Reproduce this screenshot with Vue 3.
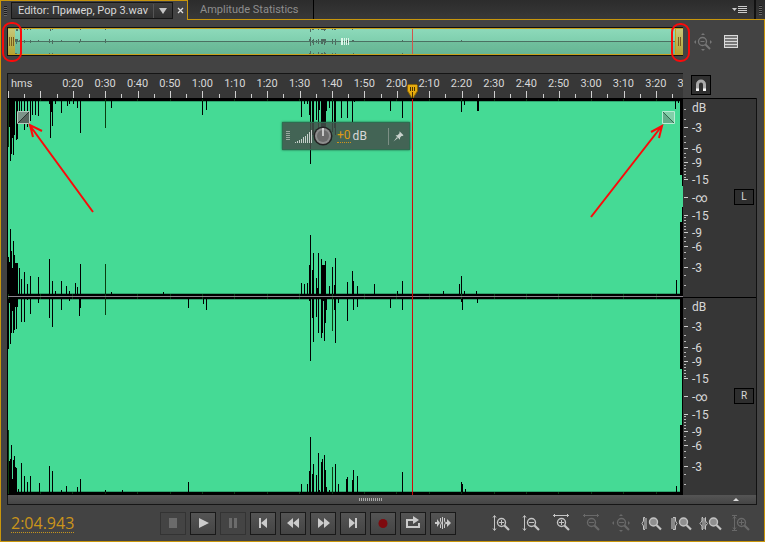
<script setup>
const SPAN = 675
const STEP = 32.4

// Peaks are [x, tip] pairs on the 675 x 396 wave canvas.
const parse = (s) => s.trim().split(/\s+/).map((p) => p.split(':').map(Number))

const peaks = [
  {
    base: 2,
    list: parse(`0:48 1:28 2:62 3:55 4:39 5:56 6:36 8:41 9:40 11:20 13:22 16:31 19:28 22:22 24:16
      27:16 30:17 41:5 42:39 43:13 44:27 47:5 53:14 59:7 61:5 65:5 69:9 72:34 97:29 103:9 194:16 198:11
      293:18 296:5 299:5 301:16 302:65 304:36 305:36 308:21 310:36 311:11 313:28 314:35 315:32 316:38 317:32
      318:12 321:9 324:33 326:29 327:36 333:19 339:19 344:23 346:3 382:12 394:19 453:13 456:6 469:12 470:12 667:10 670:4`),
  },
  {
    base: 195,
    list: parse(`0:158 1:163 2:130 3:152 4:169 5:142 6:156 7:164 8:164 9:164 11:169 13:180 16:173 19:185 22:177
      30:178 41:160 44:182 47:192 53:182 58:187 61:192 67:184 69:188 72:165 97:165 103:193 155:193
      293:184 296:185 299:184 301:166 302:136 304:171 305:154 308:179 309:189 310:154 313:160 314:166 315:166 316:166
      317:162 321:187 324:168 326:186 327:159 339:183 344:172 345:182 349:187 366:185 389:192 394:182
      435:192 451:185 453:177 456:192 468:192 668:181`),
  },
  {
    base: 200,
    list: parse(`0:250 1:204 2:245 3:234 4:212 5:234 6:231 7:208 8:230 9:208 13:223 16:223 19:201 22:215 30:204 41:219
      44:228 53:211 61:202 71:217 72:209 97:216 180:209 195:205 198:211
      301:202 302:262 304:219 305:243 308:218 310:234 313:239 314:234 315:202 316:242 317:224 318:211 324:232 326:211
      327:244 330:204 339:222 345:211 349:208 382:209 394:211 453:203 454:211 469:204`),
  },
  {
    base: 393,
    list: parse(`0:331 1:362 2:360 3:346 4:380 5:361 6:357 7:368 8:369 10:390 13:364 16:377 19:383 22:377 31:384 41:367
      44:372 53:391 58:387 69:388 72:380 97:391 114:391 180:383
      293:385 299:385 301:372 302:338 304:375 305:365 308:376 310:354 311:391 313:363 314:360 316:356 317:371 318:388
      321:391 324:368 327:365 330:385 338:380 339:378 344:381 345:371 349:377 394:373 453:383 454:385 457:390 668:387`),
  },
]

const toPath = (group) =>
  group.list
    .map(([x, tip]) => `M${x} ${Math.min(group.base, tip)}h1V${Math.max(group.base, tip)}h-1z`)
    .join('')
const peakPath = peaks.map(toPath).join('')

const labels = ['0:20', '0:30', '0:40', '0:50', '1:00', '1:10', '1:20', '1:30', '1:40', '1:50', '2:00',
  '2:10', '2:20', '2:30', '2:40', '2:50', '3:00', '3:10', '3:20', '3:30']
const ticks = Array.from({ length: 42 }, (_, i) => ({
  x: `${((i * STEP) / 2 / SPAN) * 100}%`,
  major: i % 2 === 0,
}))
const gridX = Array.from({ length: 21 }, (_, i) => Math.floor(i * STEP))

const pct = (v) => `${(v / 198) * 100}%`
const levels = [
  { y: 9, t: 'dB', none: true }, { y: 29, t: '-3' }, { y: 50, t: '-6' }, { y: 64, t: '-9' },
  { y: 81, t: '-15' }, { y: 99, t: '-∞' }, { y: 117, t: '-15' }, { y: 134, t: '-9' },
  { y: 148, t: '-6' }, { y: 169, t: '-3' },
]
const minors = [11, 21, 38, 44, 55, 59, 67, 70, 73, 76, 79, 119, 122, 125, 128, 131, 139, 143, 154, 160, 177, 187]
const bars = [1, 2, 3, 4, 6, 7, 9, 11, 13]

const transport = [
  { n: 'Stop', off: true, d: 'M9 6h8v10H9z' },
  { n: 'Play', d: 'M9 6l10 5-10 5z' },
  { n: 'Pause', off: true, d: 'M9 6h3v10H9zM14 6h3v10h-3z' },
  { n: 'Go to start', d: 'M9 6h2v10H9zM17 6v10l-6-5z' },
  { n: 'Rewind', d: 'M13 6v10l-6-5zM19 6v10l-6-5z' },
  { n: 'Fast forward', d: 'M8 6v10l6-5zM14 6v10l6-5z' },
  { n: 'Go to end', d: 'M9 6v10l6-5zM15 6h2v10h-2z' },
  { n: 'Record', rec: true },
  { n: 'Loop', d: 'M6 7h7V4l6 4-6 4V9H8v5h10v-3h2v5H6z' },
  { n: 'Skip selection', d: 'M10 6h1v3l1 2-1 2v3h-1v-3l1-2-1-2zM14 6h1v3l1 2-1 2v3h-1v-3l1-2-1-2zM5 10h2V7l3 4-3 4v-3H5zM16 10h1V7l4 4-4 4v-3h-1zM12 5h1v12h-1z' },
]
const zooms = [
  { n: 'Zoom in amplitude', k: 'v', s: '+' },
  { n: 'Zoom out amplitude', k: 'v', s: '-' },
  { n: 'Zoom in time', k: 'h', s: '+' },
  { n: 'Zoom out time', k: 'h', s: '-', off: true },
  { n: 'Zoom out full', k: 'f', s: '-', off: true },
  { n: 'Zoom in at in point', k: 'l' },
  { n: 'Zoom in at out point', k: 'r' },
  { n: 'Zoom to selection', k: 's' },
  { n: 'Zoom reset', k: 'i', s: '+', off: true },
]
</script>

<template>
  <main class="editor">
    <header class="tabs">
      <div class="tab-active">
        <span class="grip"></span>
        <button class="title">
          <span>Editor: Пример, Pop 3.wav</span>
          <svg class="caret" viewBox="0 0 16 14" width="16" height="14"><path d="M0 0h1v14H0z" fill="#555" /><path d="M6 4h8l-4 6z" fill="#c4c4c4" /></svg>
        </button>
        <button class="close" aria-label="Close tab">
          <svg viewBox="0 0 7 7" width="7" height="7"><path d="M1 1l5 5M6 1L1 6" stroke="#ddd" stroke-width="1.300" /></svg>
        </button>
      </div>
      <div class="tab-rest">
        <button class="tab">Amplitude Statistics</button>
        <button class="menu" aria-label="Panel menu">
          <svg viewBox="0 0 15 9" width="15" height="9"><path d="M0 3h5L2.500 6z" fill="#ccc" /><path d="M6 0h9v1H6zM6 2h9v1H6zM6 4h9v1H6zM6 6h9v1H6z" fill="#ccc" transform="translate(0 1)" /></svg>
        </button>
        <span class="edge"><span class="grip"></span></span>
      </div>
    </header>

    <section class="body">
      <div class="row overview-row">
        <div class="overview">
          <svg class="fill" viewBox="0 0 675 396" preserveAspectRatio="none">
            <path :d="peakPath" fill="#4f6b60" shape-rendering="crispEdges" />
            <path d="M0 190h675v15H0z" fill="#4b7062" />
          </svg>
          <svg class="over-line" viewBox="0 0 675 27" preserveAspectRatio="none">
            <path d="M404 0h1v27h-1z" fill="#d0544c" />
            <path d="M333 10h2v7h-2zM336 10h1v7h-1zM338 10h1v7h-1zM340 10h1v7h-1z" fill="#dff5ea" />
          </svg>
          <span class="handle"><i></i><i></i><i></i></span>
          <span class="handle end"><i></i><i></i></span>
        </div>
        <div class="side-tools">
          <button class="plain" aria-label="Zoom out full" disabled>
            <svg viewBox="0 0 18 18" width="18" height="18" fill="none" stroke="#777"><circle cx="8.500" cy="8.500" r="4" stroke-width="1.300" /><path d="M6.500 8.500h4" /><path d="M11.500 11.500l4.500 4.500" stroke-width="2" /><path d="M9 0l2 2H7zM9 18l-2-2h4zM0 9l2-2v4zM18 9l-2-2v4z" fill="#777" stroke="none" /></svg>
          </button>
          <button class="plain" aria-label="Track list">
            <svg viewBox="0 0 14 14" width="14" height="14"><path d="M0 0h14v13H0z" fill="#dadada" /><path d="M1 1h12v2H1zM1 4h12v2H1zM1 7h12v2H1zM1 10h12v2H1z" fill="#777" /></svg>
          </button>
        </div>
      </div>

      <div class="row time-row">
        <div class="timeline">
          <svg class="ticks" width="100%" height="7" shape-rendering="crispEdges">
            <rect v-for="t in ticks" :key="t.x" :x="t.x" :y="t.major ? 0 : 3" width="1" :height="t.major ? 7 : 4" fill="#cfcfcf" />
          </svg>
          <div class="times">
            <span class="unit">hms</span>
            <span v-for="l in labels" :key="l" class="stamp">{{ l }}</span>
          </div>
          <svg class="head" viewBox="0 0 11 15" width="11" height="15"><path d="M1.500.5h8l1 1v5.500L7 12.500 5.500 15 4 12.500.5 7V1.500z" fill="#e5ab10" stroke="#8a6505" /><path d="M3 3h1v4H3zM5 3h1v4H5zM7 3h1v4H7zM5 8h1v7H5z" fill="#4a3300" /></svg>
        </div>
        <div class="snap-cell">
          <button class="snap" aria-label="Toggle snapping">
            <svg viewBox="0 0 12 13" width="12" height="13" fill="none"><path d="M2.500 12V5.500a3.500 3.500 0 0 1 7 0V12" stroke="#aaa" stroke-width="3" /><path d="M1 9.500h3V12H1zM8 9.500h3V12H8z" fill="#fff" /></svg>
          </button>
        </div>
      </div>

      <div class="row wave-row">
        <div class="wave">
          <svg class="fill" viewBox="0 0 675 396" preserveAspectRatio="none" shape-rendering="crispEdges">
            <path d="M0 0h675v396H0z" fill="#000" />
            <path d="M0 2h672v193H0zM672 76h2v47h-2zM674 87h1v21h-1zM0 200h672v193H0zM672 270h2v56h-2z" fill="#45da95" />
            <path d="M0 2h672v1H0zM0 194h672v1H0zM0 200h672v1H0zM0 392h672v1H0z" fill="#2fa56f" />
            <path :d="peakPath" fill="#000" />
            <path d="M0 197h675v1H0z" fill="#8c878f" />
            <path v-for="x in gridX" :key="x" :d="`M${x} 0h1v2h-1zM${x} 195h1v2h-1zM${x} 198h1v2h-1zM${x} 393h1v2h-1z`" fill="#0c3a14" />
            <path d="M97 2h1v27h-1zM97 165h1v30h-1zM97 200h1v16h-1zM324 200h1v32h-1zM324 368h1v25h-1zM0 2h1v46H0zM0 331h1v62H0z" fill="#0a3d10" />
          </svg>
          <div class="playhead"></div>
          <button class="fade" aria-label="Fade in"><svg viewBox="0 0 13 13" width="13" height="13"><path d="M1 1h11v11H1z" fill="#7c9388" /><path d="M1 12L12 1v11z" fill="#56635c" /><path d="M.5.5h12v12H.5z" fill="none" stroke="#b4cabe" /><path d="M1 12L12 1" stroke="#2c3430" /></svg></button>
          <button class="fade out" aria-label="Fade out"><svg viewBox="0 0 13 13" width="13" height="13"><path d="M1 1h11v11H1z" fill="#83cfa9" /><path d="M1 1v11h11z" fill="#64ad8a" /><path d="M.5.5h12v12H.5z" fill="none" stroke="#b9ecd3" /><path d="M1 1l11 11" stroke="#32684f" /></svg></button>
          <div class="hud">
            <span class="hud-grip"></span>
            <svg class="signal" viewBox="0 0 17 14" width="17" height="14" shape-rendering="crispEdges"><rect v-for="(h, i) in bars" :key="i" :x="i * 2" :y="14 - h" width="1" :height="h" fill="#c6cfca" /></svg>
            <svg class="knob" viewBox="0 0 20 20" width="20" height="20"><circle cx="10" cy="10" r="9.500" fill="#222" /><circle cx="10" cy="10" r="8" fill="#8d8d8d" /><circle cx="10" cy="10" r="6" fill="#6b6b6b" /><path d="M10 2v8" stroke="#eee" stroke-width="1.400" /></svg>
            <button class="gain">+0</button>
            <span class="gain-unit">dB</span>
            <button class="pin" aria-label="Pin"><svg viewBox="0 0 11 11" width="11" height="11" fill="#c9d2cd"><path d="M6 0l4 4-1 .6-1 0L6.500 6.500 6.500 8.500 2 4l2 0L6 2z" transform="translate(.5 .3)" /><path d="M4 6L.5 10.500 5 7z" /></svg></button>
          </div>
        </div>
        <div class="scales">
          <div v-for="c in ['L', 'R']" :key="c" class="scale">
            <svg class="scale-art" width="50" height="100%">
              <rect v-for="m in minors" :key="m" x="1" :y="pct(m)" width="2" height="1" fill="#bbb" shape-rendering="crispEdges" />
              <template v-for="(l, i) in levels" :key="i">
                <rect v-if="!l.none" x="1" :y="pct(l.y)" width="4" height="1" fill="#ccc" shape-rendering="crispEdges" />
                <text x="9" :y="pct(l.y)" dy="5" class="level">{{ l.t }}</text>
              </template>
            </svg>
            <button class="channel">{{ c }}</button>
          </div>
        </div>
      </div>

      <div class="scrollbar">
        <span class="scroll-grip"></span>
        <svg class="up" viewBox="0 0 6 3" width="6" height="3"><path d="M3 0l3 3H0z" fill="#ddd" /></svg>
      </div>
    </section>

    <footer class="controls">
      <div class="clock"><button class="time">2:04.943</button></div>
      <div class="transport">
        <button v-for="b in transport" :key="b.n" class="key" :class="{ off: b.off }" :aria-label="b.n" :disabled="b.off">
          <svg viewBox="0 0 26 23" width="26" height="23">
            <circle v-if="b.rec" cx="13" cy="11.500" r="4.500" fill="#7e0a0e" />
            <path v-else :d="b.d" :fill="b.off ? '#6b6b6b' : '#cbcbcb'" />
          </svg>
        </button>
      </div>
      <div class="zooms">
        <button v-for="z in zooms" :key="z.n" class="plain zoom" :aria-label="z.n" :disabled="z.off">
          <svg viewBox="0 0 24 20" width="24" height="20" fill="none" :stroke="z.off ? '#696969' : '#c4c4c4'">
            <template v-if="z.k === 'v' || z.k === 'i'">
              <path d="M5.500 3v14" />
              <path v-if="z.k === 'v'" d="M4 4.500l1.500-2 1.500 2M4 15.500l1.500 2 1.500-2" />
              <path v-else d="M3 2.500h5M3 17.500h5M4 5.500l1.500-2L7 5.500M4 14.500l1.500 2 1.500-2" />
            </template>
            <path v-if="z.k === 'h'" d="M4 2.500h16M6 1l-1.500 1.500L6 4M18 1l1.500 1.500L18 4" />
            <path v-if="z.k === 'f'" d="M12 1l2 2h-4zM12 19l-2-2h4zM3 10l2-2v4zM21 10l-2-2v4z" fill="#696969" stroke="none" />
            <template v-if="z.s">
              <circle cx="12.500" cy="9.500" r="4" stroke-width="1.400" />
              <path :d="z.s === '+' ? 'M10 9.500h5M12.500 7v5' : 'M10 9.500h5'" />
              <path d="M15.500 12.500l4.500 4.500" stroke-width="2.200" />
            </template>
            <template v-else>
              <circle cx="14.500" cy="9" r="4" fill="#909090" stroke-width="1.400" />
              <path d="M17.500 12l4.500 4.500" stroke-width="2.200" />
              <path v-if="z.k === 'l'" d="M5 5h3v11H5z" fill="#888" stroke="none" />
              <path v-if="z.k === 'l'" d="M6 4.500H4.500V8L3 10.500 4.500 13v3.500H6" />
              <path v-if="z.k === 'r'" d="M2 5h4v11H2z" fill="#888" stroke="none" />
              <path v-if="z.k === 'r'" d="M4 4.500h2.500V8L8 10.500 6.500 13v3.500H4" />
              <path v-if="z.k === 's'" d="M3 5h4v11H3z" fill="#888" stroke="none" />
              <path v-if="z.k === 's'" d="M4 4.500H3V8L1 10.500 3 13v3.500h1M6 4.500h.5V8l2 2.500-2 2.500v3.500H6" />
            </template>
          </svg>
        </button>
      </div>
    </footer>

    <svg class="notes" viewBox="0 0 765 542" preserveAspectRatio="none" fill="none" stroke="#fb0a0a" stroke-width="2">
      <rect x="3" y="23" width="18" height="38" rx="8" />
      <rect x="672" y="24" width="17" height="37" rx="8" />
      <path d="M93 212L31 127M42 131l-12-6 3 12M591 217l70-90M651 132l11-6-3 12" />
    </svg>
  </main>
</template>

<style>
body {
  margin: 0;
  background: #434343;
}
</style>

<style scoped>
.editor {
  position: relative;
  box-sizing: border-box;
  display: flex;
  flex-direction: column;
  height: 100vh;
  min-height: 420px;
  background: #434343;
  color: #d8d8d8;
  font: 11px/14px Roboto, "Open Sans", sans-serif;
}
button {
  margin: 0;
  padding: 0;
  border: 0;
  background: none;
  color: inherit;
  font: inherit;
}
svg {
  display: block;
}
.tabs {
  display: flex;
  flex: none;
  height: 20px;
}
.tab-active {
  box-sizing: border-box;
  display: flex;
  align-items: center;
  gap: 4px;
  width: 188px;
  padding-left: 3px;
  border: solid #c8960c;
  border-width: 1px 1px 0;
}
.grip {
  width: 3px;
  height: 10px;
  background: repeating-linear-gradient(#1c1c1c 0 1px, #666 1px 2px);
}
.title {
  box-sizing: border-box;
  display: flex;
  flex: 1;
  align-items: center;
  justify-content: space-between;
  height: 17px;
  padding: 0 3px 0 6px;
  border: 1px solid #151515;
  background: linear-gradient(#404040, #303030);
  white-space: nowrap;
}
.close {
  padding: 0 3px 0 0;
}
.tab-rest {
  box-sizing: border-box;
  display: flex;
  flex: 1;
  align-items: center;
  border-bottom: 1px solid #c8960c;
  background: linear-gradient(#2c2c2c, #383838);
}
.tab {
  height: 19px;
  padding: 0 14px 0 12px;
  border-right: 1px solid #000;
  color: #8e8e8e;
}
.menu {
  margin-left: auto;
  padding-right: 7px;
}
.edge {
  display: flex;
  align-items: center;
  height: 19px;
  padding: 0 3px;
  border-left: 2px solid #111;
}
.body {
  display: flex;
  flex: 1;
  flex-direction: column;
  min-height: 0;
  padding: 7px 7px 0 6px;
  border: solid #c8960c;
  border-width: 0 1px;
}
.row {
  display: grid;
  grid-template-rows: minmax(0, 1fr);
  grid-template-columns: minmax(0, 1fr) 74px;
}
.overview-row {
  flex: none;
  height: 29px;
  margin-bottom: 17px;
}
.overview {
  position: relative;
  display: grid;
  grid-template-rows: minmax(0, 1fr);
  border: 1px solid #111;
  border-right-width: 0;
  background: linear-gradient(#8edabb, #7fcfae 48%, #70bf9d 52%, #66b594);
}
.overview::after {
  position: absolute;
  inset: 0;
  border: solid #c8a01c;
  border-width: 1px 0;
  content: "";
}
.fill {
  width: 100%;
  height: 100%;
}
.over-line {
  position: absolute;
  inset: 0;
  width: 100%;
  height: 100%;
}
.handle {
  position: absolute;
  inset: 0 auto 0 0;
  display: flex;
  align-items: center;
  justify-content: center;
  gap: 1px;
  width: 7px;
  background: linear-gradient(#c8c97c, #b3a230);
}
.handle.end {
  inset: 0 0 0 auto;
  border-left: 1px solid #d0a010;
}
.handle i {
  width: 1px;
  height: 9px;
  background: #7a5c20;
}
.side-tools {
  display: flex;
  align-items: center;
  gap: 12px;
  padding-left: 11px;
}
.time-row {
  flex: none;
  height: 25px;
}
.timeline {
  position: relative;
  display: flex;
  flex-direction: column;
  justify-content: space-between;
  overflow: hidden;
  border: solid #151515;
  border-width: 1px 0 0 1px;
  background: #373737;
}
.ticks {
  order: 2;
}
.times {
  display: flex;
  padding-top: 3px;
}
.unit {
  box-sizing: border-box;
  flex: 0 0 7.2%;
  padding-left: 3px;
}
.stamp {
  flex: 0 0 4.8%;
  text-align: center;
}
.head {
  position: absolute;
  bottom: -1px;
  left: 59.1%;
}
.snap-cell {
  padding: 2px 0 0 8px;
}
.snap {
  display: grid;
  box-sizing: border-box;
  width: 20px;
  height: 20px;
  place-items: center;
  border: 1px solid #000;
  background: #303030;
}
.wave-row {
  flex: 1;
  min-height: 0;
}
.wave {
  position: relative;
  display: grid;
  grid-template-rows: minmax(0, 1fr);
  border: solid #000;
  border-width: 1px 0 0 1px;
}
.playhead {
  position: absolute;
  inset: 0 auto 0 59.9%;
  width: 1px;
  background: #d00a0a;
}
.fade {
  position: absolute;
  top: 12px;
  left: 9px;
}
.fade.out {
  right: 8px;
  left: auto;
}
.hud {
  position: absolute;
  top: 23px;
  left: 40.6%;
  display: flex;
  align-items: center;
  box-sizing: border-box;
  width: 128px;
  height: 28px;
  padding: 0 3px;
  border: 1px solid #2f6b50;
  background: rgba(68, 80, 74, 0.86);
  box-shadow: 0 0 2px #1d5c40;
  font-size: 12px;
}
.hud-grip {
  width: 4px;
  height: 10px;
  margin-right: 5px;
  background: repeating-linear-gradient(#9aa8a0 0 1px, transparent 1px 2px);
}
.signal {
  margin-right: 1px;
}
.knob {
  margin-right: 4px;
}
.gain {
  border-bottom: 1px dotted #d0951a;
  color: #dd9a14;
  line-height: 13px;
}
.gain-unit {
  margin-left: 2px;
}
.pin {
  margin-left: auto;
  padding: 3px 2px 3px 4px;
  border-left: 1px solid #7c8f85;
}
.scales {
  display: flex;
  flex-direction: column;
  border-right: 1px solid #111;
  background: #363636;
}
.scale {
  display: flex;
  flex: 1;
  align-items: center;
  justify-content: space-between;
  min-height: 0;
  padding-right: 2px;
  box-shadow: inset 0 1px #000;
}
.scale-art {
  height: 100%;
}
.level {
  fill: #d8d8d8;
  font-size: 12px;
}
.channel {
  box-sizing: border-box;
  width: 20px;
  height: 16px;
  border: 1px solid #000;
  background: #2e2e2e;
  font-size: 10px;
  line-height: 14px;
}
.scrollbar {
  display: flex;
  flex: none;
  align-items: center;
  justify-content: center;
  box-sizing: border-box;
  height: 10px;
  border: solid #161616;
  border-width: 0 1px 1px;
  background: linear-gradient(#555, #454545);
}
.scroll-grip {
  width: 24px;
  height: 3px;
  margin-left: auto;
  background: repeating-linear-gradient(90deg, #aaa 0 1px, transparent 1px 2px);
}
.up {
  margin: 0 17px 0 auto;
}
.controls {
  display: flex;
  flex: none;
  align-items: center;
  box-sizing: border-box;
  height: 37px;
  padding: 0 8px 0 10px;
  border: solid #c8960c;
  border-width: 0 1px 1px;
}
.clock {
  width: 149px;
}
.time {
  border-bottom: 1px dotted #c8961c;
  color: #cb951a;
  font-family: "Open Sans", "Noto Sans", sans-serif;
  font-size: 16px;
  line-height: 18px;
}
.transport {
  display: flex;
  gap: 4px;
}
.key {
  width: 26px;
  height: 23px;
  background: linear-gradient(#555, #434343);
  box-shadow: inset 0 0 0 1px #191919;
}
.key.off {
  background: #444;
  box-shadow: inset 0 0 0 1px #333;
}
.zooms {
  display: flex;
  margin-left: auto;
}
.zoom {
  display: grid;
  width: 30px;
  height: 24px;
  place-items: center;
}
.notes {
  position: absolute;
  inset: 0;
  width: 100%;
  height: 100%;
  pointer-events: none;
}
</style>
